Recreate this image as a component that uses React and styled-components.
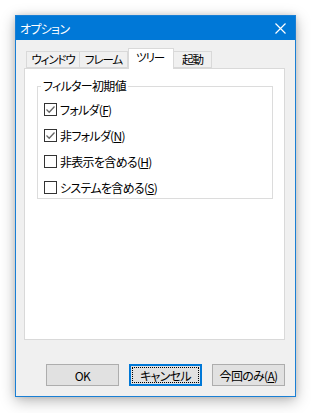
import styled, { createGlobalStyle } from "styled-components";

const GlobalStyle = createGlobalStyle`
  html, body {
    margin: 0;
    padding: 0;
    background: #ffffff;
  }
  body {
    font-family: "Noto Sans CJK JP", "Noto Sans", sans-serif;
    font-size: 12px;
    color: #000;
    font-feature-settings: "palt";
    letter-spacing: -0.7px;
  }
`;

const Page = styled.div`
  width: 311px;
  height: 413px;
  padding: 15px 0 0 15px;
  box-sizing: border-box;
`;

const Window = styled.div`
  width: 281px;
  height: 382px;
  box-sizing: border-box;
  border: 1px solid #1a7fd4;
  background: #f0f0f0;
  display: flex;
  flex-direction: column;
  box-shadow: 0 4px 14px rgba(0, 0, 0, 0.28), 0 0 6px rgba(0, 0, 0, 0.12);
`;

const TitleBar = styled.div`
  height: 24px;
  background: #0078d7;
  color: #fff;
  display: flex;
  align-items: center;
  justify-content: space-between;
  padding: 0 9px 0 4px;
  font-size: 12px;
`;

const CloseIcon = styled.svg`
  width: 11px;
  height: 11px;
  display: block;
`;

const Body = styled.div`
  flex: 1;
  display: flex;
  flex-direction: column;
  padding: 8px 10px 10px 8px;
`;

const TabStrip = styled.div`
  display: flex;
  align-items: flex-end;
  height: 20px;
  padding-left: 2px;
  position: relative;
  z-index: 1;
`;

const Tab = styled.div`
  box-sizing: border-box;
  width: ${(p) => p.$w}px;
  height: ${(p) => (p.$active ? 21 : 17)}px;
  margin-bottom: ${(p) => (p.$active ? -1 : 0)}px;
  background: ${(p) => (p.$active ? "#fff" : "#f0f0f0")};
  border: 1px solid #d9d9d9;
  border-bottom: ${(p) => (p.$active ? "none" : "1px solid #d9d9d9")};
  border-left: ${(p) => (p.$first || p.$active ? "1px solid #d9d9d9" : "none")};
  display: flex;
  align-items: center;
  justify-content: ${(p) => (p.$active ? "flex-start" : "center")};
  padding-left: ${(p) => (p.$active ? 7 : 0)}px;
  padding-bottom: ${(p) => (p.$active ? 3 : 0)}px;
  font-size: 11.5px;
  letter-spacing: -1.1px;
  line-height: 1;
  white-space: nowrap;
`;

const Panel = styled.div`
  height: 272px;
  box-sizing: border-box;
  background: #fff;
  border: 1px solid #d9d9d9;
  padding: 10px 11px 0 12px;
`;

const Group = styled.fieldset`
  margin: 0;
  box-sizing: border-box;
  height: 120px;
  border: 1px solid #dcdcdc;
  padding: 3px 6px 0 6px;
  display: grid;
  grid-auto-rows: 26px;
  align-content: start;
`;

const Legend = styled.legend`
  padding: 0 2px;
  margin-left: -3px;
  line-height: 14px;
  font-size: 12px;
`;

const Row = styled.label`
  display: flex;
  align-items: center;
  gap: 3px;
  font-size: 12px;
`;

const Box = styled.span`
  width: 13px;
  height: 13px;
  box-sizing: border-box;
  border: 1px solid #333;
  background: #fff;
  display: flex;
  align-items: center;
  justify-content: center;
  flex-shrink: 0;
`;

const Key = styled.u`
  text-decoration: underline;
  text-underline-offset: 1px;
`;

const ButtonRow = styled.div`
  margin-top: 24px;
  display: flex;
  justify-content: flex-end;
  gap: 10px;
`;

const Button = styled.div`
  width: 73px;
  height: 22px;
  box-sizing: border-box;
  background: #e1e1e1;
  border: ${(p) => (p.$focus ? "2px solid #0078d7" : "1px solid #adadad")};
  display: flex;
  align-items: center;
  justify-content: center;
  font-size: 12px;
  position: relative;
`;

const FocusRect = styled.span`
  position: absolute;
  inset: 1px;
  border: 1px dotted #000;
  pointer-events: none;
`;

const Check = () => (
  <svg width="11" height="11" viewBox="0 0 11 11">
    <path d="M1.5 5.5 L4.2 8.2 L9.5 2.5" fill="none" stroke="#666" strokeWidth="1.3" />
  </svg>
);

const CheckRow = ({ checked, label, k }) => (
  <Row>
    <Box>{checked && <Check />}</Box>
    <span>
      {label}(<Key>{k}</Key>)
    </span>
  </Row>
);

const App = () => (
  <Page>
    <GlobalStyle />
    <Window>
      <TitleBar>
        <span>オプション</span>
        <CloseIcon viewBox="0 0 11 11">
          <path d="M0.5 0.5 L10.5 10.5 M10.5 0.5 L0.5 10.5" stroke="#fff" strokeWidth="1.2" />
        </CloseIcon>
      </TitleBar>
      <Body>
        <TabStrip>
          <Tab $w={54} $first>ウィンドウ</Tab>
          <Tab $w={48}>フレーム</Tab>
          <Tab $w={46} $active>ツリー</Tab>
          <Tab $w={38}>起動</Tab>
        </TabStrip>
        <Panel>
          <Group>
            <Legend>フィルター初期値</Legend>
            <CheckRow checked label="フォルダ" k="F" />
            <CheckRow checked label="非フォルダ" k="N" />
            <CheckRow label="非表示を含める" k="H" />
            <CheckRow label="システムを含める" k="S" />
          </Group>
        </Panel>
        <ButtonRow>
          <Button>OK</Button>
          <Button $focus>
            キャンセル
            <FocusRect />
          </Button>
          <Button>
            今回のみ(<Key>A</Key>)
          </Button>
        </ButtonRow>
      </Body>
    </Window>
  </Page>
);

export default App;
